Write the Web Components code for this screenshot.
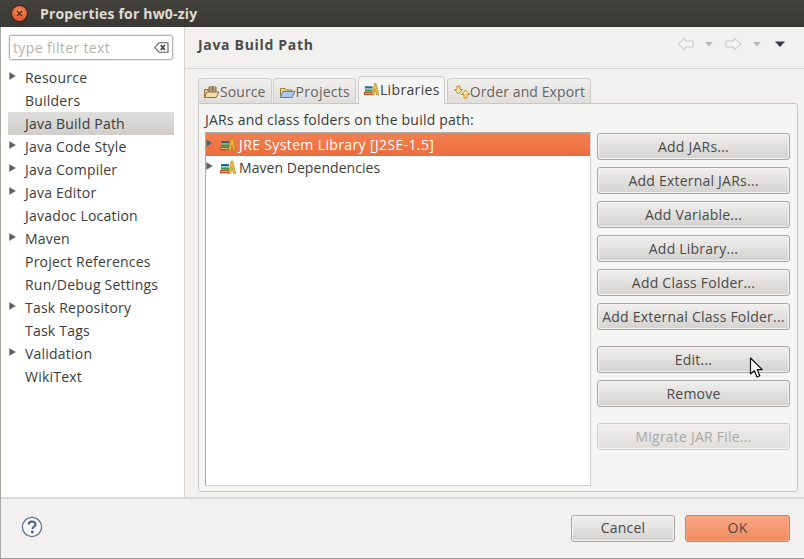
<!DOCTYPE html>
<html><head><meta charset="utf-8">
<style>
html,body{margin:0;padding:0;background:#f2f1f0}
body{width:804px;height:559px;overflow:hidden;font:14px/20px "Open Sans","Noto Sans",sans-serif;color:#3c3c3c}
</style></head>
<body>
<x-dialog></x-dialog>
<script>
const BOOKS=`<svg width="18" height="16" viewBox="0 0 18 16"><rect x="2" y="4" width="8" height="2.6" fill="#1f6f8f"/><rect x="2" y="6.6" width="8" height=".8" fill="#e4e8cc"/><rect x="2" y="7.4" width="8" height="2.4" fill="#3f9a52"/><rect x="1" y="10" width="9" height="3.4" fill="#b5552c"/><rect x="2" y="11" width="7.5" height="1" fill="#e8a878"/><path d="M9.3 13.4L12.3 1H13.7L16.7 13.4H14.4L13 7.5L11.6 13.4Z" fill="#eebd3e" stroke="#a8761a" stroke-width=".6"/></svg>`;
const TW=`<svg width="8" height="8" viewBox="0 0 8 8"><path d="M.5 .5 L6.5 4 L.5 7.5Z" fill="#5a5a58" stroke="#8a8a88" stroke-width=".7"/></svg>`;
function def(name,css,html,attrs){
  customElements.define(name,class extends HTMLElement{
    constructor(){super();const r=this.attachShadow({mode:"open"});r.innerHTML=`<style>${css}</style>${typeof html==="function"?html(this):html}`;}
    connectedCallback(){if(attrs)attrs(this,this.shadowRoot);}
  });
}
def("x-titlebar",`:host{display:flex;align-items:center;height:27px;background:linear-gradient(#44423d,#3a3834);padding-left:12px;gap:13px;font:bold 14px "Open Sans",sans-serif;color:#dfdbd2;letter-spacing:.18px}
.c{width:15px;height:15px;border-radius:50%;background:radial-gradient(circle at 50% 35%,#f48a5e,#dc4a1f);display:flex;align-items:center;justify-content:center;box-shadow:0 0 0 1px #2c2a27}`,
`<span class="c"><svg width="7" height="7" viewBox="0 0 7 7"><path d="M1 1L6 6M6 1L1 6" stroke="#4a2a1c" stroke-width="1.3"/></svg></span><slot></slot>`);

def("x-filter",`:host{display:flex;align-items:center;justify-content:space-between;box-sizing:border-box;margin:8px 10px 6px 8px;width:164px;height:25px;background:#fff;border:1px solid #b8b5ae;border-radius:3px;padding:0 3px 0 3px;color:#b4b2ae;font-size:14px;letter-spacing:.37px;box-shadow:0 0 0 1px #e9e8e6}`,
`<slot></slot><svg width="15" height="11" viewBox="0 0 15 11"><path d="M5 .8H14V10.2H5L.8 5.5Z" fill="#fff" stroke="#5e5c58" stroke-width="1.1"/><path d="M6.8 3L10.8 8M10.8 3L6.8 8" stroke="#45433f" stroke-width="1.7"/></svg>`);

def("x-tree-item",`:host{display:flex;align-items:center;height:23px;padding-left:8px;margin-right:10px;font-size:14px;color:#3c3c3c;letter-spacing:.22px}
:host([sel]){background:linear-gradient(#dededc,#cfcecb);margin-left:7px;padding-left:1px}
.t{width:16px;flex:none;display:flex;align-items:center;margin-top:-3px}`,
t=>`<span class="t">${t.hasAttribute("arrow")?TW:""}</span><slot></slot>`);

def("x-sidebar",`:host{display:block;flex:none;width:183px;background:#fff;border-right:1px solid #d5d3cf;overflow:hidden}
.tree{display:block}`,`<slot name="filter"></slot><div class="tree"><slot></slot></div>`);

def("x-navicons",`:host{display:flex;align-items:center;gap:0;margin-right:13px}
svg{display:block}`,
`<svg width="114" height="16" viewBox="0 0 114 16">
<path d="M1 8L8 2V5H16V11H8V14Z" fill="#f4f3f2" stroke="#c9c7c3"/>
<path d="M28 6H36L32 10.5Z" fill="#b9b7b3"/>
<path d="M64 8L57 2V5H49V11H57V14Z" fill="#f4f3f2" stroke="#c9c7c3"/>
<path d="M76 6H84L80 10.5Z" fill="#b9b7b3"/>
<path d="M98 5.5H108L103 11Z" fill="#3b3558"/>
</svg>`);

def("x-header",`:host{display:flex;align-items:center;justify-content:space-between;box-sizing:border-box;height:42px;padding:0 0 7px 13px;border-bottom:1px solid #d8d6d2;font:bold 14px "Open Sans",sans-serif;color:#4b4b4b;letter-spacing:.68px}`,
`<slot></slot><x-navicons></x-navicons>`);

def("x-tab",`:host{display:flex;align-items:center;box-sizing:border-box;height:25px;margin-top:1px;padding:2px 5px 0;background:linear-gradient(#f0efed,#dfdedb);border:1px solid #cfcdc9;border-bottom:none;border-radius:4px 4px 0 0;color:#66635f;font-size:14px;gap:0;letter-spacing:.1px}
:host([active]){height:28px;margin-top:-1px;margin-bottom:-1px;background:#f5f5f4;color:#3c3c3c;position:relative;z-index:1;padding-top:0;padding-bottom:1px;letter-spacing:.35px}
::slotted(svg){flex:none}`,`<slot name="i"></slot><slot></slot>`);

def("x-tabs",`:host{display:flex;align-items:flex-end;gap:1px;height:25px;margin-top:9px;padding-left:13px}`,`<slot></slot>`);

def("x-row",`:host{display:flex;align-items:center;height:23px;font-size:14px;color:#3c3c3c;letter-spacing:.05px}
:host([sel]){background:linear-gradient(#f4804f,#ec6d3f);color:#fff;letter-spacing:.37px}
.t{width:13px;display:flex;margin-top:-3px}.b{display:flex;width:20px}`,
`<span class="t">${TW}</span><span class="b">${BOOKS}</span><slot></slot>`);

def("x-list",`:host{display:block;box-sizing:border-box;width:386px;height:354px;background:#fff;border:1px solid #aeaca6;border-right-color:#d5d3cf;border-bottom-color:#d5d3cf}`,`<slot></slot>`);

def("x-btn",`:host{display:flex;align-items:center;justify-content:center;box-sizing:border-box;height:27px;border:1px solid #a9a7a1;border-radius:3px;background:linear-gradient(#f0efed,#d3d2cf);font-size:14px;color:#4a4a4a;letter-spacing:.22px;box-shadow:inset 0 0 0 1px #f4f3f2}
:host([off]){color:#a9a8a5;border-color:#d0cec9;background:linear-gradient(#efeeec,#e0dfdc)}
:host([ok]){background:linear-gradient(#fba985,#f08a5f);border-color:#b98770;box-shadow:inset 0 0 0 1px #f8a582}
:host([w]){width:104px}
:host([ok][w]){width:105px}`,`<slot></slot>`);

def("x-btncol",`:host{display:flex;flex-direction:column;gap:7px;width:193px;margin-top:1px}
::slotted(.gap1){margin-top:9px}`,`<slot></slot>`);

def("x-panel",`:host{display:flex;flex-direction:column;box-sizing:border-box;width:600px;height:389px;margin-left:13px;background:#f5f5f4;border:1px solid #c9c7c3;border-radius:0 3px 3px 3px;padding:6px 6px 5px 6px}
.l{height:22px;line-height:20px;font-size:14px;color:#3c3c3c;letter-spacing:.22px}.m{display:flex;gap:6px}`,
`<div class="l"><slot name="label"></slot></div><div class="m"><slot name="list"></slot><slot name="btns"></slot></div>`);

def("x-content",`:host{display:block;flex:1;min-width:0}`,`<slot></slot>`);

def("x-footer",`:host{display:flex;align-items:center;box-sizing:border-box;height:60px;border-top:2px solid #dcdad6;padding:16px 14px 16px 20px;gap:10px}
.h{margin-right:auto;display:flex;margin-top:-2px}`,
`<span class="h"><svg width="22" height="22" viewBox="0 0 22 22"><circle cx="11" cy="11" r="9.6" fill="#f8f8f8" stroke="#5a6f96" stroke-width="1.2"/><path d="M7.6 8.4C7.8 6.4 9.3 5.5 11 5.5C13 5.5 14.5 6.6 14.5 8.4C14.5 10.6 11.7 10.6 11.5 13" fill="none" stroke="#47608c" stroke-width="2.1"/><circle cx="11.3" cy="16" r="1.4" fill="#47608c"/></svg></span><slot></slot>`);

def("x-cursor",`:host{position:absolute;left:749px;top:357px;width:15px;height:22px;display:block}`,
`<svg width="15" height="22" viewBox="0 0 15 22"><path d="M1.5 1V17L5.3 13.6L8 20L10.8 18.8L8.2 12.6H13.2Z" fill="#fff" stroke="#111" stroke-width="1.2" stroke-linejoin="round"/></svg>`);

const FOLDER=(c1,c2,s)=>`<svg slot="i" width="17" height="14" viewBox="0 0 17 14"><path d="M1.5 12.5V3.5H6L7 5H13V12.5Z" fill="${c2}" stroke="#9a7a3a"/><path d="M1.5 12.5L4 6.5H16L13 12.5Z" fill="${c1}" stroke="${s}"/></svg>`;
const SRC=`<svg slot="i" width="17" height="14" viewBox="0 0 17 14"><path d="M1.5 12.5V4.5H5V6H13V12.5Z" fill="#e7c98d" stroke="#94703a"/><path d="M1.5 12.5L4 7H16L13 12.5Z" fill="#f4dca6" stroke="#94703a"/><path d="M6 6V2H13V6M9.5 1V6M6 4H13" fill="none" stroke="#7d5a2f"/></svg>`;
const ORDER=`<svg slot="i" width="17" height="14" viewBox="0 0 17 14"><path d="M4 1H7V4.5H9.5L5.5 9L1.5 4.5H4Z" fill="#fbe9a8" stroke="#b98a1d"/><path d="M11 13H14V9.5H16.5L12.5 5L8.5 9.5H11Z" fill="#fbe9a8" stroke="#b98a1d"/></svg>`;

def("x-dialog",`:host{display:block;box-sizing:border-box;width:804px;height:559px;border-bottom:1px solid #a09e98;position:relative}
.b{display:flex;height:470px;border-left:1px solid #a9a7a1}
.f{border-left:1px solid #a9a7a1;height:61px}`,
`<x-titlebar>Properties for hw0-ziy</x-titlebar>
<div class="b">
<x-sidebar>
<x-filter slot="filter">type filter text</x-filter>
<x-tree-item arrow>Resource</x-tree-item>
<x-tree-item>Builders</x-tree-item>
<x-tree-item sel>Java Build Path</x-tree-item>
<x-tree-item arrow>Java Code Style</x-tree-item>
<x-tree-item arrow>Java Compiler</x-tree-item>
<x-tree-item arrow>Java Editor</x-tree-item>
<x-tree-item>Javadoc Location</x-tree-item>
<x-tree-item arrow>Maven</x-tree-item>
<x-tree-item>Project References</x-tree-item>
<x-tree-item>Run/Debug Settings</x-tree-item>
<x-tree-item arrow>Task Repository</x-tree-item>
<x-tree-item>Task Tags</x-tree-item>
<x-tree-item arrow>Validation</x-tree-item>
<x-tree-item>WikiText</x-tree-item>
</x-sidebar>
<x-content>
<x-header>Java Build Path</x-header>
<x-tabs>
<x-tab style="padding-left:4px">${SRC}Source</x-tab>
<x-tab style="letter-spacing:.25px">${FOLDER("#a9c8ee","#f0d590","#5c7fb0")}Projects</x-tab>
<x-tab active style="padding-left:4px;padding-right:4px;margin-left:1px;margin-right:1px"><span slot="i" style="display:flex;width:17px">${BOOKS}</span>Libraries</x-tab>
<x-tab>${ORDER}Order and Export</x-tab>
</x-tabs>
<x-panel>
<span slot="label">JARs and class folders on the build path:</span>
<x-list slot="list">
<x-row sel>JRE System Library [J2SE-1.5]</x-row>
<x-row>Maven Dependencies</x-row>
</x-list>
<x-btncol slot="btns">
<x-btn>Add JARs...</x-btn>
<x-btn>Add External JARs...</x-btn>
<x-btn>Add Variable...</x-btn>
<x-btn>Add Library...</x-btn>
<x-btn>Add Class Folder...</x-btn>
<x-btn>Add External Class Folder...</x-btn>
<x-btn class="gap1">Edit...</x-btn>
<x-btn>Remove</x-btn>
<x-btn off class="gap1">Migrate JAR File...</x-btn>
</x-btncol>
</x-panel>
</x-content>
</div>
<div class="f"><x-footer><x-btn w>Cancel</x-btn><x-btn w ok>OK</x-btn></x-footer></div>
<x-cursor></x-cursor>`);
</script>
</body></html>
